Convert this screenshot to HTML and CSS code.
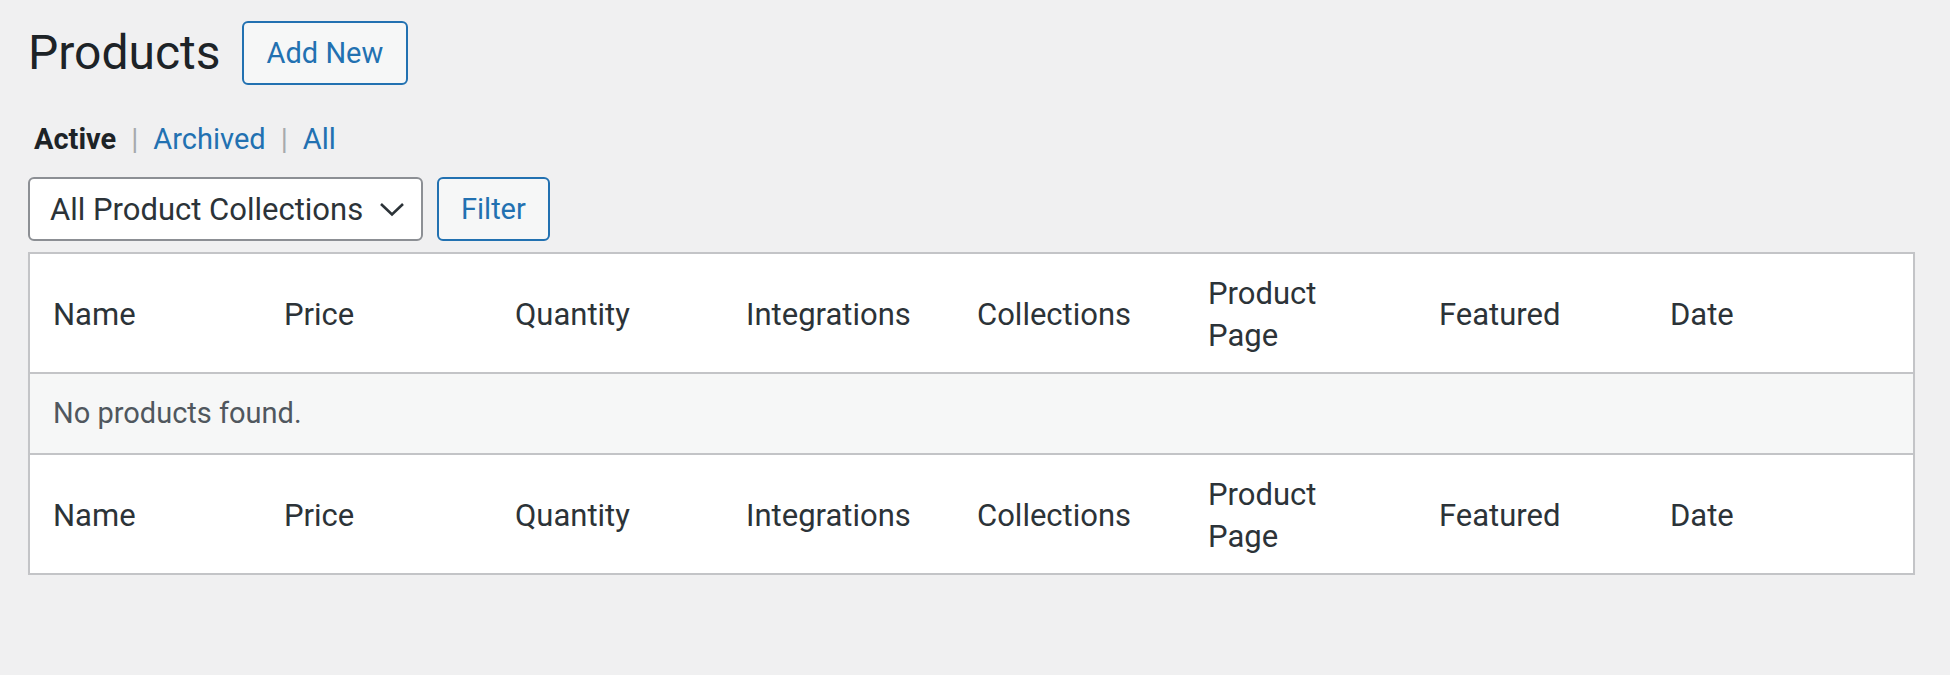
FILE: index.html
```html
<!DOCTYPE html>
<html lang="en">
<head>
    <meta charset="UTF-8">
    <meta name="viewport" content="width=device-width, initial-scale=1.0">
    <title>Products</title>
    <link rel="stylesheet" href="styles.css">
</head>
<body>
    <div class="wrap">
        <!-- 제목 + 새로 추가 버튼 -->
        <div class="title-row">
            <h1>Products</h1>
            <a class="button" href="#">Add New</a>
        </div>

        <!-- 상태 필터 -->
        <ul class="subsubsub">
            <li class="current">Active</li>
            <li class="sep">|</li>
            <li><a href="#">Archived</a></li>
            <li class="sep">|</li>
            <li><a href="#">All</a></li>
        </ul>

        <div class="tablenav">
            <div class="select">
                <span>All Product Collections</span>
                <svg width="26" height="15" viewBox="0 0 26 15">
                    <polyline points="2,2 13,12.5 24,2" fill="none" stroke="#2c3338" stroke-width="2.6"/>
                </svg>
            </div>
            <button type="button" class="button">Filter</button>
        </div>

        <table class="widefat">
            <colgroup>
                <col class="col">
                <col class="col">
                <col class="col">
                <col class="col">
                <col class="col">
                <col class="col">
                <col class="col">
                <col>
            </colgroup>
            <thead>
                <tr>
                    <th>Name</th>
                    <th>Price</th>
                    <th>Quantity</th>
                    <th>Integrations</th>
                    <th>Collections</th>
                    <th>Product<br>Page</th>
                    <th>Featured</th>
                    <th>Date</th>
                </tr>
            </thead>
            <tbody>
                <tr>
                    <td colspan="8">No products found.</td>
                </tr>
            </tbody>
            <tfoot>
                <tr>
                    <th>Name</th>
                    <th>Price</th>
                    <th>Quantity</th>
                    <th>Integrations</th>
                    <th>Collections</th>
                    <th>Product<br>Page</th>
                    <th>Featured</th>
                    <th>Date</th>
                </tr>
            </tfoot>
        </table>
    </div>
</body>
</html>
```

FILE: styles.css
```css
body {
    font-family: Roboto, "Liberation Sans", sans-serif;
    background-color: #f0f0f1;
    color: #2c3338;
    margin: 0;
    padding: 0;
}

.wrap {
    padding: 21px 35px 0 28px;
}

.title-row {
    display: flex;
    align-items: center;
    gap: 21px;
}

h1 {
    font-size: 48px;
    font-weight: 400;
    line-height: 64px;
    color: #1d2327;
    margin: 0;
}

.button {
    display: inline-block;
    box-sizing: border-box;
    height: 64px;
    padding: 0 23px;
    font-family: inherit;
    font-size: 29px;
    line-height: 60px;
    color: #2271b1;
    background-color: #f6f7f7;
    border: 2px solid #2271b1;
    border-radius: 6px;
    text-decoration: none;
    cursor: pointer;
}

.subsubsub {
    list-style: none;
    display: flex;
    margin: 34px 0 0 6px;
    padding: 0;
    font-size: 29px;
    line-height: 40px;
}

.subsubsub .current {
    font-weight: 700;
    color: #1d2327;
}

.subsubsub a {
    color: #2271b1;
    text-decoration: none;
}

.subsubsub .sep {
    color: #a7aaad;
    margin: 0 15px;
}

.tablenav {
    display: flex;
    gap: 14px;
    margin-top: 18px;
}

.select {
    box-sizing: border-box;
    width: 395px;
    height: 64px;
    display: flex;
    align-items: center;
    justify-content: space-between;
    padding: 0 16px 0 20px;
    font-size: 31px;
    color: #2c3338;
    background-color: #fff;
    border: 2px solid #8c8f94;
    border-radius: 6px;
}

.tablenav .button {
    padding: 0 22px;
}

.widefat {
    width: 100%;
    margin-top: 11px;
    table-layout: fixed;
    border-collapse: separate;
    border-spacing: 0;
    background-color: #fff;
    border: 2px solid #c3c4c7;
    box-shadow: 0 1px 1px rgba(0, 0, 0, 0.04);
}

.widefat .col {
    width: 231px;
}

.widefat th {
    padding: 19px 23px 15px;
    font-size: 31px;
    font-weight: 400;
    line-height: 42px;
    text-align: left;
    color: #2c3338;
}

.widefat thead th {
    border-bottom: 2px solid #c3c4c7;
}

.widefat tfoot th {
    border-top: 2px solid #c3c4c7;
}

.widefat td {
    padding: 19px 23px;
    font-size: 29px;
    line-height: 41px;
    color: #50575e;
    background-color: #f6f7f7;
}
```
